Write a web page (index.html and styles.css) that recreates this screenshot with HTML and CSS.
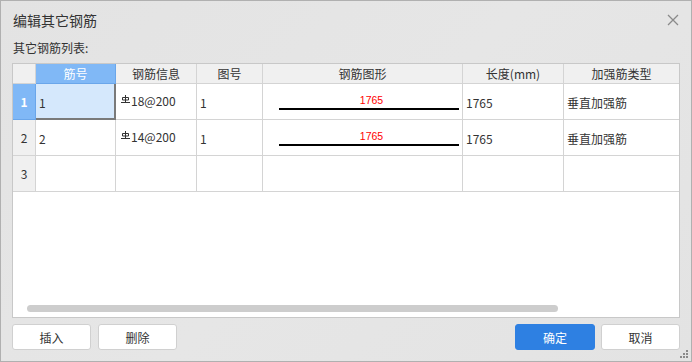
FILE: index.html
```html
<!DOCTYPE html>
<html lang="zh">
<head>
<meta charset="utf-8">
<title>编辑其它钢筋</title>
<link rel="stylesheet" href="styles.css">
</head>
<body>
<div class="dialog">
  <div class="titlebar">
    <span class="title">编辑其它钢筋</span>
    <svg class="close" width="12" height="12" viewBox="0 0 12 12"><path d="M1 1 L11 11 M11 1 L1 11" stroke="#8a8a8a" stroke-width="1.3" fill="none"/></svg>
  </div>
  <div class="label">其它钢筋列表:</div>
  <div class="grid">
    <div class="cells">
      <div class="hc corner"></div>
      <div class="hc sel">筋号</div>
      <div class="hc">钢筋信息</div>
      <div class="hc">图号</div>
      <div class="hc">钢筋图形</div>
      <div class="hc">长度(mm)</div>
      <div class="hc last">加强筋类型</div>

      <div class="rh sel">1</div>
      <div class="c active">1</div>
      <div class="c info"><svg class="sym" width="9" height="8" viewBox="0 0 9 8"><path d="M4.5 0 V7 M1.5 2.5 H7.5 V5 H1.5 Z M0 7.5 H9" stroke="#333" stroke-width="1" fill="none"/></svg>18@200</div>
      <div class="c">1</div>
      <div class="c shape"><span class="dim">1765</span><span class="bar"></span></div>
      <div class="c">1765</div>
      <div class="c last">垂直加强筋</div>

      <div class="rh">2</div>
      <div class="c">2</div>
      <div class="c info"><svg class="sym" width="9" height="8" viewBox="0 0 9 8"><path d="M4.5 0 V7 M1.5 2.5 H7.5 V5 H1.5 Z M0 7.5 H9" stroke="#333" stroke-width="1" fill="none"/></svg>14@200</div>
      <div class="c">1</div>
      <div class="c shape"><span class="dim">1765</span><span class="bar"></span></div>
      <div class="c">1765</div>
      <div class="c last">垂直加强筋</div>

      <div class="rh">3</div>
      <div class="c"></div>
      <div class="c"></div>
      <div class="c"></div>
      <div class="c"></div>
      <div class="c"></div>
      <div class="c last"></div>
    </div>
    <div class="scrollbar"></div>
  </div>
  <div class="buttons">
    <div class="group">
      <button class="btn">插入</button>
      <button class="btn">删除</button>
    </div>
    <div class="group right">
      <button class="btn primary">确定</button>
      <button class="btn">取消</button>
    </div>
  </div>
  <svg class="grip" width="10" height="10" viewBox="0 0 10 10">
    <rect x="7" y="1" width="2" height="2" fill="#8a8a8a"/>
    <rect x="4" y="4" width="2" height="2" fill="#8a8a8a"/>
    <rect x="7" y="4" width="2" height="2" fill="#8a8a8a"/>
    <rect x="1" y="7" width="2" height="2" fill="#8a8a8a"/>
    <rect x="4" y="7" width="2" height="2" fill="#8a8a8a"/>
    <rect x="7" y="7" width="2" height="2" fill="#8a8a8a"/>
  </svg>
</div>
</body>
</html>
```
FILE: styles.css
```css
* { box-sizing: border-box; }
html, body { margin: 0; padding: 0; }
body {
  font-family: "Noto Sans CJK SC", "Noto Sans", sans-serif;
  color: #333;
  background: #e5e5e5;
}
.dialog {
  position: relative;
  width: 692px;
  height: 362px;
  border: 1px solid #b0b0b0;
  background: linear-gradient(135deg, #e3e3e3 0%, #e6e6e6 50%, #e3e3e3 100%);
  padding: 0 11px;
}
.titlebar {
  height: 38px;
  display: flex;
  align-items: center;
  justify-content: space-between;
}
.title {
  font-size: 14px;
  color: #333;
  padding-left: 1px;
}
.close { margin-right: 1px; }
.label {
  font-size: 12px;
  line-height: 18px;
  height: 18px;
  margin-bottom: 6px;
  padding-left: 1px;
}
.grid {
  position: relative;
  height: 255px;
  border: 1px solid #c8c8c8;
  background: #fff;
}
.cells {
  display: grid;
  grid-template-columns: 23px 80px 81px 66px 200px 101px 115px;
  grid-template-rows: 20px 36px 36px 36px;
  font-size: 12px;
}
.hc, .rh, .c {
  border-right: 1px solid #d4d4d4;
  border-bottom: 1px solid #d4d4d4;
  display: flex;
  align-items: center;
  white-space: nowrap;
}
.hc {
  background: #f0f0f0;
  justify-content: center;
  color: #333;
}
.hc.sel {
  background: #80b8f6;
  color: #fff;
  border-right-color: #6aa6ea;
  border-bottom-color: #6aa6ea;
}
.rh {
  background: #f0f0f0;
  justify-content: center;
}
.rh.sel {
  background: #80b8f6;
  color: #fff;
  font-weight: bold;
  border-color: #6aa6ea;
}
.last { border-right: none; }
.c {
  padding-left: 3px;
  padding-top: 1px;
}
.c.active {
  background: #d5e8fc;
  border-right: 2px solid #7a7a7a;
  border-bottom: 2px solid #7a7a7a;
  padding-top: 2px;
}
.c.info {
  padding-left: 5px;
  padding-bottom: 4px;
}
.sym {
  margin-right: 1px;
  align-self: center;
  margin-top: -3px;
}
.shape {
  flex-direction: column;
  align-items: flex-start;
  justify-content: flex-start;
  padding-left: 16px;
  padding-top: 10px;
}
.dim {
  width: 180px;
  text-align: center;
  color: #f00;
  font-family: "Liberation Sans", sans-serif;
  font-size: 10.5px;
  line-height: 12px;
  padding-left: 5px;
}
.bar {
  display: block;
  width: 180px;
  height: 2px;
  background: #000;
  margin-top: 2px;
}
.scrollbar {
  position: absolute;
  left: 14px;
  top: 241px;
  width: 531px;
  height: 7px;
  border-radius: 4px;
  background: #cdcdcd;
}
.buttons {
  display: flex;
  justify-content: space-between;
  margin-top: 6px;
}
.group {
  display: flex;
  gap: 7px;
}
.group.right { gap: 6px; }
.btn {
  width: 79px;
  height: 26px;
  border: 1px solid #d0d0d0;
  border-radius: 3px;
  background: #fff;
  font-family: "Noto Sans CJK SC", "Noto Sans", sans-serif;
  font-size: 12px;
  color: #333;
  padding: 0;
}
.btn.primary {
  width: 80px;
  background: #2e80e2;
  border-color: #2e80e2;
  color: #fff;
}
.grip {
  position: absolute;
  right: 2px;
  bottom: 2px;
}
```
